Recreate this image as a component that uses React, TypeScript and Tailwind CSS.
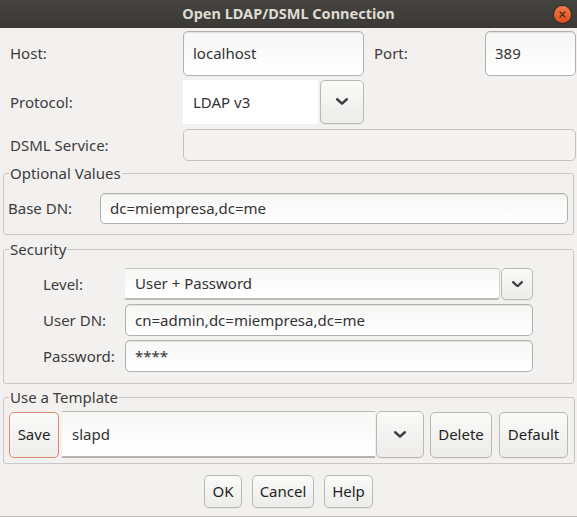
import React from "react"

function Chevron({ size = 12 }: { size?: number }) {
  return (
    <svg width={size} height={size * 0.6} viewBox="0 0 12 7" fill="none">
      <path d="M1.2 1.2 L6 5.6 L10.8 1.2" stroke="#404040" strokeWidth="2.5" strokeLinecap="round" strokeLinejoin="round" />
    </svg>
  )
}

const entry =
  "flex items-center bg-gradient-to-b from-[#f6f6f5] to-white border border-[#b3b1ad] rounded-[5px] px-[9px] text-[#333] shadow-[inset_0_1px_1px_rgba(0,0,0,0.08)]"
const button =
  "flex items-center justify-center bg-gradient-to-b from-[#fafaf9] to-[#edecea] border border-[#bab8b4] rounded-[5px] text-[#1f1f1f] shadow-[0_1px_0_rgba(0,0,0,0.04)]"
const legend = "ml-[5px] px-[1px] leading-[18px] text-[#3c3c3c]"
const fieldset = "mx-[3px] border border-[#c9c7c3] rounded-[3px]"

export default function App() {
  return (
    <div
      className="w-[577px] h-[517px] bg-[#f2f1f0] text-[15px] text-[#3c3c3c] flex flex-col overflow-hidden"
      style={{ fontFamily: '"Noto Sans", "DejaVu Sans", sans-serif' }}
    >
      {/* title bar */}
      <div className="relative h-[28px] shrink-0 bg-gradient-to-b from-[#45443f] to-[#3a3935] flex items-center justify-center">
        <span className="font-bold text-[14.5px] text-[#dfdbd2]">Open LDAP/DSML Connection</span>
        <div className="absolute right-[6px] top-[6px] w-[17px] h-[17px] rounded-full bg-gradient-to-b from-[#f27a45] to-[#df4c1a] flex items-center justify-center shadow-[0_0_0_1px_rgba(0,0,0,0.3)]">
          <svg width="7" height="7" viewBox="0 0 7 7">
            <path d="M1 1 L6 6 M6 1 L1 6" stroke="#4a2a1a" strokeWidth="1.3" strokeLinecap="round" />
          </svg>
        </div>
      </div>

      {/* connection rows */}
      <div className="flex items-center pl-[10px] mt-[3px] h-[45px]">
        <span className="w-[173px]">Host:</span>
        <div className={`${entry} w-[181px] h-full`}>localhost</div>
        <span className="ml-[10px] w-[111px]">Port:</span>
        <div className={`${entry} w-[91px] h-full`}>389</div>
      </div>
      <div className="flex items-center pl-[10px] mt-[4px] h-[44px]">
        <span className="w-[173px]">Protocol:</span>
        <div className="w-[135px] h-full bg-white flex items-center px-[10px] text-[#333]">LDAP v3</div>
        <div className={`${button} ml-[2px] w-[44px] h-full`}>
          <Chevron />
        </div>
      </div>
      <div className="flex items-center pl-[10px] pr-[1px] mt-[5px] h-[32px]">
        <span className="w-[173px]">DSML Service:</span>
        <div className="flex-1 h-full bg-[#f4f3f2] border border-[#c4c2be] rounded-[5px]" />
      </div>

      {/* optional values */}
      <fieldset className={`${fieldset} mt-[3px]`}>
        <legend className={legend}>Optional Values</legend>
        <div className="flex items-center pl-[4px] pr-[5px] mt-[11px] mb-[10px] h-[31px]">
          <span className="w-[92px]">Base DN:</span>
          <div className={`${entry} flex-1 h-full`}>dc=miempresa,dc=me</div>
        </div>
      </fieldset>

      {/* security */}
      <fieldset className={`${fieldset} mt-[5px]`}>
        <legend className={legend}>Security</legend>
        <div className="flex flex-col gap-[4px] pl-[39px] pr-[40px] mt-[10px] mb-[11px]">
          <div className="flex items-center h-[32px]">
            <span className="w-[82px]">Level:</span>
            <div className="flex-1 h-full flex items-center px-[10px] text-[#333] bg-gradient-to-b from-[#f7f7f6] to-white border-t border-b-2 border-r border-t-[#c4c2be] border-b-[#bdbbb7] border-r-[#d6d4d0] rounded-r-[4px]">
              User + Password
            </div>
            <div className={`${button} ml-[1px] w-[32px] h-full`}>
              <Chevron size={11} />
            </div>
          </div>
          <div className="flex items-center h-[32px]">
            <span className="w-[82px]">User DN:</span>
            <div className={`${entry} flex-1 h-full`}>cn=admin,dc=miempresa,dc=me</div>
          </div>
          <div className="flex items-center h-[32px]">
            <span className="w-[82px]">Password:</span>
            <div className={`${entry} flex-1 h-full`}>****</div>
          </div>
        </div>
      </fieldset>

      {/* template */}
      <fieldset className={`${fieldset} mt-[4px]`}>
        <legend className={legend}>Use a Template</legend>
        <div className="flex items-center pl-[5px] pr-[6px] mt-[5px] mb-[5px] h-[47px]">
          <div className="w-[50px] h-[46px] flex items-center justify-center rounded-[5px] border border-[#d98a6f] bg-gradient-to-b from-[#fafaf9] to-[#efeeec] text-[#1f1f1f]">
            Save
          </div>
          <div className="ml-[3px] w-[313px] h-full flex items-center px-[10px] text-[#333] bg-gradient-to-b from-[#f7f7f6] to-white border-t border-b-2 border-t-[#bcbab6] border-b-[#b5b3af]">
            slapd
          </div>
          <div className={`${button} ml-[1px] w-[48px] h-full`}>
            <Chevron />
          </div>
          <div className={`${button} ml-[6px] w-[62px] h-[46px]`}>Delete</div>
          <div className={`${button} ml-[7px] w-[69px] h-[46px]`}>Default</div>
        </div>
      </fieldset>

      {/* dialog buttons */}
      <div className="flex justify-center gap-[10px] mt-[11px] h-[33px]">
        <div className={`${button} w-[38px] h-full`}>OK</div>
        <div className={`${button} w-[62px] h-full`}>Cancel</div>
        <div className={`${button} w-[49px] h-full`}>Help</div>
      </div>
      <div className="mt-auto border-t border-[#bdbbb7]" />
    </div>
  )
}
